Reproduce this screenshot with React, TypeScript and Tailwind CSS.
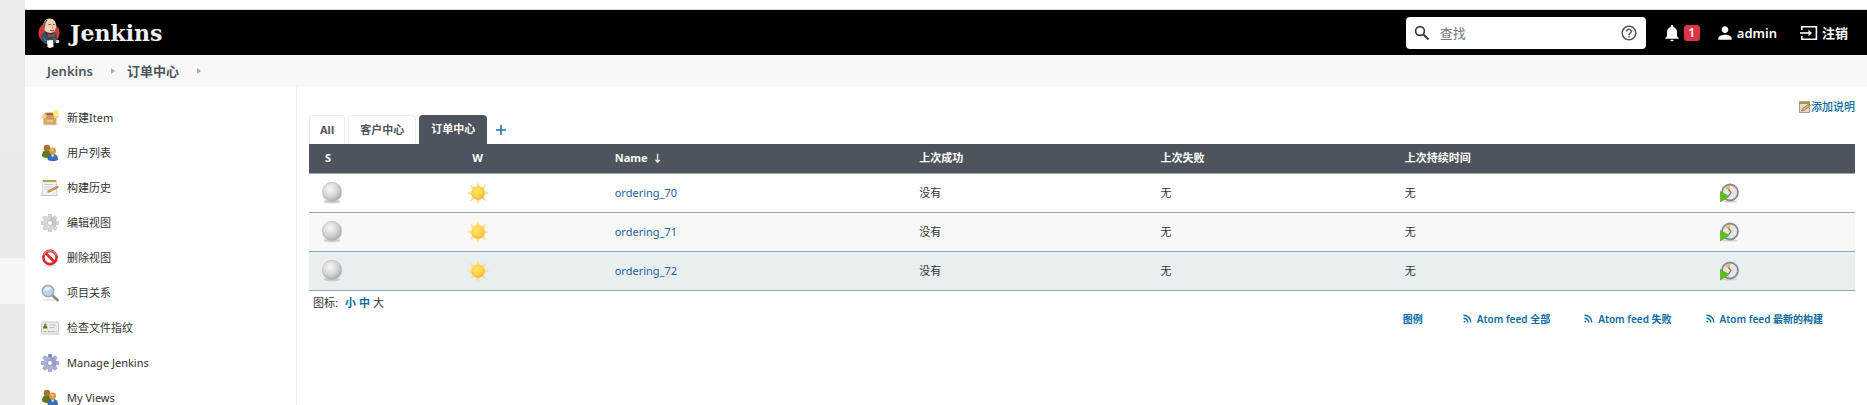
import React from 'react';

type IconProps = { className?: string };

const JenkinsLogo: React.FC<IconProps> = ({ className = '' }) => (
  <svg viewBox="0 0 22 30" className={className} aria-hidden="true">
    <circle cx="11" cy="15" r="10.6" fill="#d33833" />
    <path d="M7 14c-3 1-4.500 3-4 6 .5 3 2 5 5 6h7c3-1 4.500-3 4-6l-1-5-4-2z" fill="#335061" />
    <path d="M7 15l3 5 3-4 3 3v-4l-5-2z" fill="#1f3644" />
    <path d="M5.500 7c0-4 3-6.500 6.500-6.500s6 3 6 7c0 4.500-2 7.500-5.500 7.500-4 0-7-3-7-8z" fill="#efd5b5" />
    <path d="M6 4.500c-1.500 2-1.500 5 0 7.500l1.200-3.500c0-3 1-5 2.800-7-1.800.3-3 1-4 3z" fill="#7d6553" />
    <path d="M10.500 6.500h2.200M15 6.500h1.800M12 12c1.500 1 3 1 4 0" stroke="#49372d" strokeWidth=".9" fill="none" />
    <path d="M14 7.500l1 2.200h-1.200" stroke="#a97d63" strokeWidth=".7" fill="none" />
    <path d="M9.500 15.500l3.500 1.500 3.500-2v4l-3.500-1-3.500 1z" fill="#d33833" />
    <path d="M9 22.500l6-.500.500 7-4 1-2-1z" fill="#fff" />
    <circle cx="19.500" cy="23.500" r="1.800" fill="#e5e9ea" />
    <path d="M5 19l3 4M16 21l3 2" stroke="#6d93a8" strokeWidth=".8" />
  </svg>
);

const SearchIcon: React.FC<IconProps> = ({ className = '' }) => (
  <svg viewBox="0 0 16 16" className={className} fill="none" stroke="#333" strokeWidth="1.6" aria-hidden="true">
    <circle cx="6" cy="6" r="4.400" />
    <path d="M9.500 9.500l5 5" strokeWidth="1.900" />
  </svg>
);

const HelpIcon: React.FC<IconProps> = ({ className = '' }) => (
  <svg viewBox="0 0 24 24" className={className} fill="#4d545d" aria-hidden="true">
    <path d="M11 18h2v-2h-2v2zm1-16C6.48 2 2 6.48 2 12s4.48 10 10 10 10-4.48 10-10S17.52 2 12 2zm0 18c-4.41 0-8-3.59-8-8s3.59-8 8-8 8 3.59 8 8-3.59 8-8 8zm0-14c-2.21 0-4 1.79-4 4h2c0-1.1.9-2 2-2s2 .9 2 2c0 2-3 1.75-3 5h2c0-2.25 3-2.5 3-5 0-2.21-1.79-4-4-4z" />
  </svg>
);

const BellIcon: React.FC<IconProps> = ({ className = '' }) => (
  <svg viewBox="0 0 24 24" className={className} fill="currentColor" aria-hidden="true">
    <path d="M12 22c1.1 0 2-.9 2-2h-4c0 1.1.89 2 2 2zm6-6v-5c0-3.07-1.64-5.64-4.5-6.32V4c0-.83-.67-1.5-1.5-1.5s-1.5.67-1.5 1.5v.68C7.63 5.36 6 7.92 6 11v5l-2 2v1h16v-1l-2-2z" />
  </svg>
);

const PersonIcon: React.FC<IconProps> = ({ className = '' }) => (
  <svg viewBox="0 0 24 24" className={className} fill="currentColor" aria-hidden="true">
    <path d="M12 12c2.21 0 4-1.79 4-4s-1.79-4-4-4-4 1.79-4 4 1.79 4 4 4zm0 2c-2.67 0-8 1.34-8 4v2h16v-2c0-2.66-5.33-4-8-4z" />
  </svg>
);

const LogoutIcon: React.FC<IconProps> = ({ className = '' }) => (
  <svg viewBox="0 0 18 16" className={className} fill="none" stroke="currentColor" strokeWidth="1.6" aria-hidden="true">
    <path d="M1.8 5V1.8h14.6v12.4H1.8V11" />
    <path d="M0 8h10" />
    <path d="M8.5 4.8L12 8l-3.5 3.2z" fill="currentColor" stroke="none" />
  </svg>
);

const BoxIcon: React.FC<IconProps> = ({ className = '' }) => (
  <svg viewBox="0 0 18 18" className={className} aria-hidden="true">
    <ellipse cx="9" cy="15.600" rx="8" ry="1" fill="#ddd" />
    <path d="M3 5l1.500-1.500h9L15 5v4H3z" fill="#c9935a" />
    <path d="M5 6l1-1.500h6.500L13.500 6z" fill="#8a6232" />
    <path d="M2.500 8h13v6.500a1 1 0 0 1-1 1h-11a1 1 0 0 1-1-1z" fill="#dfa862" />
    <path d="M3 4.500L0 7.500l1 1.500h4L6 6zM15 4.500l3 3L17 9h-4l-1-3z" fill="#efcb98" />
    <path d="M5 8.500h8v1.500H5z" fill="#cf9450" />
    <path d="M6 12h6" stroke="#efd0a0" strokeWidth="1.400" />
    <circle cx="15" cy="3.800" r="3" fill="#fff692" />
    <circle cx="15" cy="3.800" r="1.800" fill="#fcec3c" />
  </svg>
);

const PeopleIcon: React.FC<IconProps> = ({ className = '' }) => (
  <svg viewBox="0 0 18 18" className={className} aria-hidden="true">
    <path d="M1 12c0-4 2-6 5-6s5 2 5 6c-2 2.500-8 2.500-10 0z" fill="#5b7a1e" />
    <circle cx="6" cy="4" r="3.300" fill="#a8732e" />
    <path d="M6.500 15.500c0-4 2-5.500 5.200-5.500s5.300 1.500 5.300 5.500c-2 2.300-8.500 2.300-10.500 0z" fill="#3b6fb5" />
    <path d="M10 10.500l1.700 3 1.700-3z" fill="#dce8f5" />
    <circle cx="11.700" cy="7" r="3.400" fill="#e09a3e" />
    <circle cx="11" cy="6" r="1.500" fill="#f3bd6e" />
  </svg>
);

const NotepadIcon: React.FC<IconProps> = ({ className = '' }) => (
  <svg viewBox="0 0 18 18" className={className} aria-hidden="true">
    <path d="M1.500 1h14l1 16H.500z" fill="#c4c4c4" />
    <path d="M2 2h13l.7 14H1.400z" fill="#f1f1ef" />
    <path d="M2 1h13v2H2z" fill="#b3a04a" />
    <path d="M3.500 5.500h9M3.500 8h7M3.500 10.500h4" stroke="#c5c5c5" strokeWidth=".8" />
    <path d="M6.500 13.300l1-1.800 8-4 1.200 1.500-8 4z" fill="#dc9a48" stroke="#8f6a30" strokeWidth=".5" />
    <path d="M15.300 7.500l1.500-.8 1 1.500-1.200.8z" fill="#d9705c" />
  </svg>
);

const teeth = [0, 45, 90, 135, 180, 225, 270, 315];

const GearIcon: React.FC<IconProps & { tone: 'gray' | 'blue' }> = ({ tone, className = '' }) => {
  const light = tone === 'gray' ? '#d8d8d8' : '#aab2d8';
  const dark = tone === 'gray' ? '#adadad' : '#7580ad';
  return (
    <svg viewBox="0 0 18 18" className={className} aria-hidden="true">
      {teeth.map(a => (
        <path key={a} d="M6.900 4.500l.7-4.300h2.800l.7 4.300z" fill={a === 0 && tone === 'blue' ? dark : light} stroke={dark} strokeWidth=".5" transform={`rotate(${a} 9 9)`} />
      ))}
      <circle cx="9" cy="9" r="6.200" fill={light} />
      <path d="M9 2.800a6.200 6.200 0 0 1 4.400 10.600L9 9z" fill={dark} opacity=".4" />
      <circle cx="9" cy="9" r="2.500" fill="#fff" stroke={dark} strokeWidth=".7" />
    </svg>
  );
};

const ForbiddenIcon: React.FC<IconProps> = ({ className = '' }) => (
  <svg viewBox="0 0 18 18" className={className} aria-hidden="true">
    <ellipse cx="9" cy="16.500" rx="6" ry="1" fill="#ddd" />
    <circle cx="9" cy="8.500" r="6.600" fill="#fff" stroke="#d5292c" strokeWidth="2.600" />
    <path d="M4.500 4l9 9" stroke="#d5292c" strokeWidth="2.600" />
    <path d="M2.600 6.500a6.700 6.700 0 0 1 12.800 0" stroke="#e98080" strokeWidth="1.200" fill="none" />
  </svg>
);

const MagnifierIcon: React.FC<IconProps> = ({ className = '' }) => (
  <svg viewBox="0 0 18 18" className={className} aria-hidden="true">
    <ellipse cx="8" cy="15.800" rx="7" ry="1.300" fill="#e8e8e8" />
    <path d="M11 11l5.500 5" stroke="#8b8b8b" strokeWidth="2.800" strokeLinecap="round" />
    <circle cx="7" cy="7" r="5.700" fill="#b8d5f2" stroke="#a3a9b2" strokeWidth="1.500" />
    <path d="M3 7a4 4 0 0 1 7-2.700C9 6.500 6 7 3 7z" fill="#e2effb" />
  </svg>
);

const CardIcon: React.FC<IconProps> = ({ className = '' }) => (
  <svg viewBox="0 0 18 18" className={className} aria-hidden="true">
    <rect x=".500" y="3" width="17" height="12" rx="1" fill="#ececea" stroke="#cacac8" />
    <path d="M2 9.500c0-2.500 1-3 2.200-3s2.300.5 2.300 3z" fill="#5b7a1e" />
    <circle cx="4.200" cy="5.800" r="1.400" fill="#b5722b" />
    <path d="M8.500 6h6M8.500 8.500h5" stroke="#c3c3c1" />
    <path d="M2.500 12.500h13" stroke="#aaaaa8" strokeDasharray="3 1" />
  </svg>
);

const BallIcon: React.FC<IconProps> = ({ className = '' }) => (
  <svg viewBox="0 0 24 24" className={className} aria-hidden="true">
    <defs>
      <radialGradient id="ball" cx="40%" cy="35%" r="65%">
        <stop offset="0" stopColor="#f8f8f8" />
        <stop offset=".6" stopColor="#d4d4d4" />
        <stop offset="1" stopColor="#acacac" />
      </radialGradient>
    </defs>
    <ellipse cx="12" cy="20.500" rx="8.500" ry="1.800" fill="#bcbcbc" opacity=".7" />
    <circle cx="12" cy="11" r="9.700" fill="url(#ball)" stroke="#b5b5b5" strokeWidth=".6" />
  </svg>
);

const SunIcon: React.FC<IconProps> = ({ className = '' }) => (
  <svg viewBox="0 0 24 24" className={className} aria-hidden="true">
    <defs>
      <radialGradient id="sun" cx="42%" cy="38%" r="65%">
        <stop offset="0" stopColor="#ffe566" />
        <stop offset=".6" stopColor="#fdd44a" />
        <stop offset="1" stopColor="#f6a93b" />
      </radialGradient>
    </defs>
    {teeth.map(a => (
      <path key={a} d="M9.800 6L12 .5 14.200 6z" fill="#fbdf9c" transform={`rotate(${a} 12 12)`} />
    ))}
    <circle cx="12" cy="12" r="6.700" fill="url(#sun)" />
  </svg>
);

const ScheduleIcon: React.FC<IconProps> = ({ className = '' }) => (
  <svg viewBox="0 0 20 20" className={className} aria-hidden="true">
    <ellipse cx="10" cy="18.500" rx="7" ry="1" fill="#cfcfcf" />
    <circle cx="10" cy="9.500" r="8" fill="#e6e6e0" stroke="#8a879c" strokeWidth="1.800" />
    <path d="M10 9L5.500 5c1-1.500 3-2 4.500-1.800z" fill="#e6bd45" />
    <path d="M8.500 6.500L11 9.500 8.500 13" stroke="#666" strokeWidth="1.100" fill="none" />
    <path d="M.500 8.500l8.500 5-8.500 5.500z" fill="#5fbf1a" stroke="#48a010" strokeWidth=".6" />
  </svg>
);

const EditNoteIcon: React.FC<IconProps> = ({ className = '' }) => (
  <svg viewBox="0 0 12 12" className={className} aria-hidden="true">
    <path d="M.5 1h10v10.500H.500z" fill="#dcdcd6" stroke="#9c9c94" />
    <path d="M0 .500h11V3H0z" fill="#a8935a" />
    <path d="M2.500 10l1-2.500L10 3l1.500 1.500L5 9.500z" fill="#e8b04a" stroke="#7a5a28" strokeWidth=".6" />
  </svg>
);

const FeedIcon: React.FC<IconProps> = ({ className = '' }) => (
  <svg viewBox="0 0 9 9" className={className} fill="none" stroke="currentColor" strokeWidth="1.400" aria-hidden="true">
    <path d="M.500 1.200a7.300 7.300 0 0 1 7.300 7.300M.500 4.200a4.300 4.300 0 0 1 4.300 4.300" />
    <circle cx="1.400" cy="7.600" r=".600" fill="currentColor" strokeWidth=".600" />
  </svg>
);

const Chevron: React.FC = () => (
  <svg viewBox="0 0 4 6" className="h-[6px] w-[4px]" fill="#aaa" aria-hidden="true">
    <path d="M0 0l4 3-4 3z" />
  </svg>
);

const tasks = [
  { label: '新建Item', icon: <BoxIcon className="size-[18px]" /> },
  { label: '用户列表', icon: <PeopleIcon className="size-[18px]" /> },
  { label: '构建历史', icon: <NotepadIcon className="size-[18px]" /> },
  { label: '编辑视图', icon: <GearIcon tone="gray" className="size-[18px]" /> },
  { label: '删除视图', icon: <ForbiddenIcon className="size-[18px]" /> },
  { label: '项目关系', icon: <MagnifierIcon className="size-[18px]" /> },
  { label: '检查文件指纹', icon: <CardIcon className="size-[18px]" /> },
  { label: 'Manage Jenkins', icon: <GearIcon tone="blue" className="size-[18px]" /> },
  { label: 'My Views', icon: <PeopleIcon className="size-[18px]" /> }
];

const jobs = [
  { name: 'ordering_70', row: 'bg-white' },
  { name: 'ordering_71', row: 'bg-[#f8f8f8]' },
  { name: 'ordering_72', row: 'bg-[#e9eef1]' }
];

const feeds = ['Atom feed 全部', 'Atom feed 失败', 'Atom feed 最新的构建'];

const Header: React.FC = () => (
  <header className="flex h-[46px] items-center justify-between border-t border-[#d8dcdc] bg-black pl-[13px] pr-[19px] text-white">
    <a href="#" className="flex items-center gap-[10px]">
      <JenkinsLogo className="h-[30px] w-[22px]" />
      <span className="font-['DejaVu_Serif',serif] text-[22px] font-bold leading-[30px] text-[#f2f2f2]">Jenkins</span>
    </a>
    <div className="flex items-center text-[13px] font-semibold leading-5">
      <div className="mr-4 flex h-8 w-60 items-center rounded bg-white px-2">
        <SearchIcon className="size-4 shrink-0" />
        <input
          type="text"
          aria-label="查找"
          placeholder="查找"
          className="ml-[10px] min-w-0 flex-1 font-normal text-[#333] outline-none placeholder:text-[#777]"
        />
        <a href="#" aria-label="帮助"><HelpIcon className="size-[18px]" /></a>
      </div>
      <button type="button" className="mr-[15px] flex items-center gap-[2px]" aria-label="1">
        <BellIcon className="size-5" />
        <span className="size-4 rounded-[3px] bg-[#dc3545] text-center text-[12px] leading-4">1</span>
      </button>
      <a href="#" className="mr-[23px] flex items-center gap-[2px]">
        <PersonIcon className="size-5" />
        admin
      </a>
      <a href="#" className="flex items-center gap-1 font-bold">
        <LogoutIcon className="h-4 w-[18px]" />
        注销
      </a>
    </div>
  </header>
);

const Breadcrumbs: React.FC = () => (
  <nav className="flex h-8 items-center bg-[#f8f8f8] pl-[22px] text-[13px] font-semibold leading-5 text-[#4d545d]">
    <a href="#" className="mr-[18px]">Jenkins</a>
    <Chevron />
    <a href="#" className="ml-3 mr-[18px]">订单中心</a>
    <Chevron />
  </nav>
);

const SidePanel: React.FC = () => (
  <nav className="w-[272px] shrink-0 border-r border-[#ebeeef] pl-4 pt-[13px]">
    {tasks.map(task => (
      <a key={task.label} href="#" className="flex h-[35px] items-center gap-2 leading-4">
        {task.icon}
        {task.label}
      </a>
    ))}
  </nav>
);

const ViewTabs: React.FC = () => (
  <div className="flex h-[29px] gap-[3px] font-bold leading-7 text-[#4d545d]">
    <a href="#" className="rounded-t border border-b-0 border-[#e9eef1] px-[10px]">All</a>
    <a href="#" className="rounded-t border border-b-0 border-[#e9eef1] px-[11px]">客户中心</a>
    <a href="#" className="rounded-t bg-[#4d545d] px-3 text-white">订单中心</a>
    <button type="button" aria-label="新建视图" className="ml-[6px] text-[#1674a8]">
      <svg viewBox="0 0 10 10" className="size-[10px]" stroke="currentColor" strokeWidth="1.600" aria-hidden="true">
        <path d="M5 0v10M0 5h10" />
      </svg>
    </button>
  </div>
);

const ProjectTable: React.FC = () => (
  <table className="w-full table-fixed border-collapse text-left">
    <colgroup>
      <col className="w-[9.4%]" />
      <col className="w-[9.6%]" />
      <col className="w-[19.7%]" />
      <col className="w-[15.6%]" />
      <col className="w-[15.8%]" />
      <col className="w-[20.4%]" />
      <col className="w-[9.5%]" />
    </colgroup>
    <thead className="bg-[#4d545d] font-bold text-white">
      <tr className="h-[29px] border-b border-[#98a6ad]">
        <th className="pl-4">S</th>
        <th className="pl-[18px]">W</th>
        <th className="pl-3"><a href="#">Name<span className="ml-[5px] text-[10px]">↓</span></a></th>
        <th className="pl-3">上次成功</th>
        <th className="pl-3">上次失败</th>
        <th className="pl-3">上次持续时间</th>
        <th className="pl-3" />
      </tr>
    </thead>
    <tbody>
      {jobs.map(job => (
        <tr key={job.name} className={`h-[39px] border-b border-[#98a6ad] ${job.row}`}>
          <td className="pl-[11px]"><BallIcon className="size-6" /></td>
          <td className="pl-3"><SunIcon className="size-6" /></td>
          <td className="pl-3"><a href="#" className="text-[#1b639b]">{job.name}</a></td>
          <td className="pl-3">没有</td>
          <td className="pl-3">无</td>
          <td className="pl-3">无</td>
          <td className="pl-3">
            <button type="button" aria-label="构建" className="block"><ScheduleIcon className="size-5" /></button>
          </td>
        </tr>
      ))}
    </tbody>
  </table>
);

const App: React.FC = () => (
  <div className="flex h-screen overflow-hidden bg-white font-['Noto_Sans','Noto_Sans_CJK_SC',sans-serif] text-[11px] leading-4 text-[#333]">
    {/* Desktop edge showing beside the page */}
    <div className="w-[25px] shrink-0 bg-linear-to-b from-[#edebea] to-[#e9e9e9] pt-[258px]">
      <div className="h-[46px] bg-[#f6f6f6]" />
    </div>

    <div className="flex min-w-0 flex-1 flex-col pt-[9px]">
      <Header />
      <Breadcrumbs />
      <div className="flex min-h-0 flex-1">
        <SidePanel />
        <main className="min-w-0 flex-1 px-3 pt-3">
          <div className="flex justify-end">
            <a href="#" className="flex items-center font-medium text-[#0b6aa2]">
              <EditNoteIcon className="size-3" />
              添加说明
            </a>
          </div>
          <ViewTabs />
          <ProjectTable />
          <div className="mt-1 flex items-center gap-[3px] pl-1">
            <span className="mr-1">图标:</span>
            <a href="#" className="font-bold text-[#0b6aa2]">小</a>
            <a href="#" className="font-bold text-[#0b6aa2]">中</a>
            <span>大</span>
          </div>
          <div className="flex justify-end gap-[34px] pr-8 text-[10px] font-semibold text-[#0b6aa2]">
            <a href="#" className="mr-[6px]">图例</a>
            {feeds.map(feed => (
              <a key={feed} href="#" className="flex items-center gap-[5px]">
                <FeedIcon className="size-[9px]" />
                {feed}
              </a>
            ))}
          </div>
        </main>
      </div>
    </div>
  </div>
);

export default App;
